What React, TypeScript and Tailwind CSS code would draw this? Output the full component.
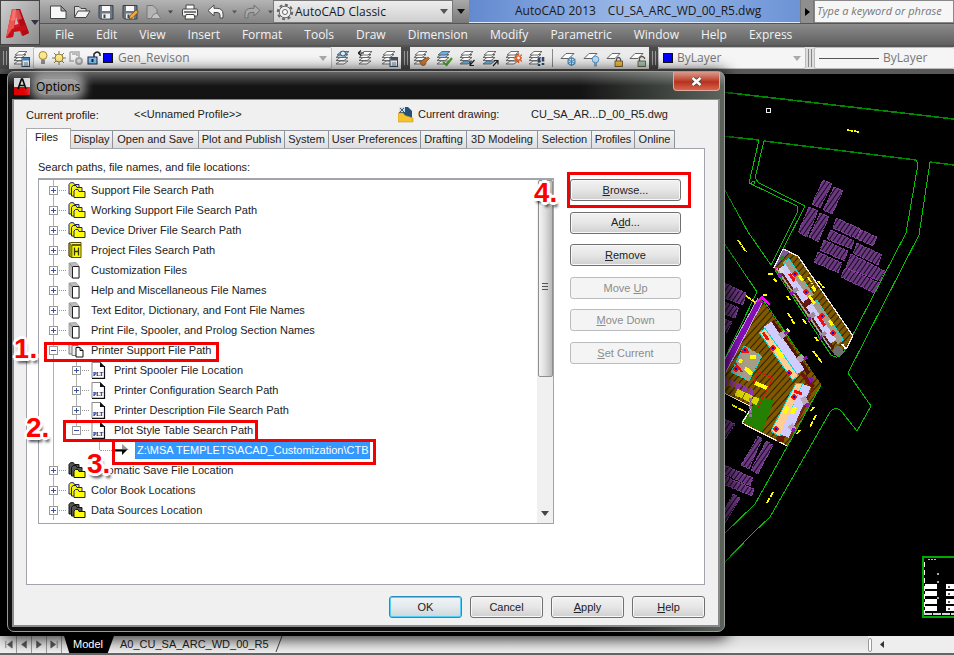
import React from "react";

const UI = "font-['Liberation_Sans',Arial,sans-serif]";
const SEGOE = "font-['Open_Sans','Noto_Sans',sans-serif]";

/* ---------- small glyphs ---------- */

function Caret({ color = "#333", small }: { color?: string; small?: boolean }) {
  return (
    <svg width={small ? 5 : 8} height={small ? 4 : 5} viewBox="0 0 8 5" className="pointer-events-none shrink-0">
      <path d="M0 0H8L4 5Z" fill={color} />
    </svg>
  );
}

type QuickName = "new" | "open" | "save" | "saveas" | "plot" | "print" | "undo" | "redo";

function QuickIcon({ name }: { name: QuickName }) {
  return (
    <svg width="18" height="16" viewBox="0 0 18 16" className="shrink-0">
      {name === "new" && <path d="M1.500 2H12L17 7V14.500H1.500ZM12 2V7H17" fill="#f8f8f8" stroke="#444" />}
      {name === "open" && (
        <>
          <path d="M1.500 13V2.500H6L8 4.500H13V7" fill="#ddd" stroke="#444" />
          <path d="M1.500 13.500L5 7H17L13 13.500Z" fill="#f4f4f4" stroke="#444" />
        </>
      )}
      {(name === "save" || name === "saveas") && (
        <>
          <path d="M2 1.500H16V15H3.500L2 13.500Z" fill="#6d7884" stroke="#38414a" />
          <rect x="5" y="2" width="8" height="5" fill="#fafafa" />
          <rect x="5" y="9.500" width="8" height="5" fill="#eee" />
          <rect x="6.500" y="10.500" width="2" height="3.500" fill="#444" />
        </>
      )}
      {name === "saveas" && <path d="M8 15L9 11.500L15 6L17.500 8L11.500 14Z" fill="#f0a83c" stroke="#6b4a16" strokeWidth=".8" />}
      {name === "plot" && (
        <>
          <path d="M2 1.500H8L12 5.500V14.500H2Z" fill="#b4b4b4" stroke="#777" />
          <path d="M6 14.500Q8 9 12 9L16 14.500Z" fill="#c4c4c4" stroke="#808080" />
        </>
      )}
      {name === "print" && (
        <>
          <path d="M5 5V1H13V5" fill="#fff" stroke="#444" />
          <rect x="1.500" y="5" width="15" height="7" rx="1" fill="#f1f1f1" stroke="#444" />
          <path d="M3 8H15" stroke="#555" strokeWidth="1.500" />
          <path d="M5 10.500H13L14 15H4Z" fill="#fff" stroke="#444" />
        </>
      )}
      {name === "undo" && <path d="M1 6.500L7 1V4.300H10Q16 4.500 16 10V14H13V11Q13 8.500 10 8.500H7V12Z" fill="#f6f6f6" stroke="#4a4a4a" />}
      {name === "redo" && <path d="M17 6.500L11 1V4.300H8Q2 4.500 2 10V14H5V11Q5 8.500 8 8.500H11V12Z" fill="#a9a9a9" stroke="#6f6f6f" />}
    </svg>
  );
}

type LayerName =
  | "props" | "current" | "prev" | "states" | "match" | "check"
  | "iso" | "uniso" | "gear" | "walk" | "freeze" | "off" | "lock" | "unlock";

function LayerIcon({ name }: { name: LayerName }) {
  const single = name === "freeze" || name === "off" || name === "lock" || name === "unlock";
  const blue = name === "current" || name === "check";
  const low = name === "iso" || name === "uniso";
  return (
    <svg width="17" height="17" viewBox="0 0 17 17" className="shrink-0">
      {single ? (
        <path d="M1 8.500L6 3.500H14L9 8.500Z" fill="#fff" stroke="#666" />
      ) : (
        <g fill="#fff" stroke="#606060" strokeWidth=".9">
          <path d="M1 14L5 11H13L9 14Z" fill={low ? "#65b2e8" : "#fff"} />
          <path d="M1 10.500L5 7.500H13L9 10.500Z" />
          <path d="M1 7.500L5 4.500H13L9 7.500Z" fill={blue ? "#a9d5f4" : "#fff"} />
          <path d="M2 5L6 1.500H14L10 5Z" fill={blue ? "#65b2e8" : "#fff"} />
        </g>
      )}
      {(name === "props" || name === "states") && (
        <>
          <rect x="9" y="7.500" width="7.500" height="9" fill="#eef4fa" stroke="#35506c" />
          <rect x="9.500" y="8" width="6.500" height="2.500" fill={name === "props" ? "#3f86c6" : "#4a5560"} />
          <path d="M11 13H15M11 15H15" stroke="#666" strokeWidth=".8" />
        </>
      )}
      {name === "current" && <circle cx="8" cy="3.500" r="2.500" fill="#dcecf8" stroke="#333" strokeWidth=".8" />}
      {name === "prev" && <path d="M0 3H6M0 3L3 .5M0 3L3 5.500" stroke="#222" strokeWidth="1.200" fill="none" />}
      {name === "match" && <path d="M6 11Q9 13 10 10L15 7L16.500 8.500L13 12Q13 16 9 15.500Z" fill="#c9772e" stroke="#7c441a" strokeWidth=".7" />}
      {name === "check" && <path d="M7 12L10.500 15L16 8" fill="none" stroke="#43a320" strokeWidth="2.200" />}
      {name === "iso" && <path d="M15.500 10L11 15M11 11.500V15.500H15" fill="none" stroke="#222" strokeWidth="1.200" />}
      {name === "uniso" && <path d="M11 16L15.500 11M12 10.500H16V14.500" fill="none" stroke="#222" strokeWidth="1.200" />}
      {name === "gear" && (
        <>
          <path d="M13.500 3V13M8.500 8H18M10 4.500L17 11.500M17 4.500L10 11.500" stroke="#e8642c" strokeWidth="1.400" />
          <circle cx="13.500" cy="8" r="2" fill="#fff" stroke="#e8642c" strokeWidth="1.200" />
        </>
      )}
      {name === "walk" && <path d="M11 8V12.500M11 14V16M15 7V11.500M15 13V15" stroke="#2b4a72" strokeWidth="2.600" />}
      {name === "freeze" && (
        <>
          <circle cx="11.500" cy="11.500" r="3.500" fill="#d8effc" stroke="#4c8fc4" strokeWidth="1.300" />
          <path d="M11.500 7V16M7.500 9.200L15.500 13.800M15.500 9.200L7.500 13.800" stroke="#4c8fc4" />
        </>
      )}
      {name === "off" && (
        <>
          <circle cx="12.500" cy="9.500" r="3.300" fill="#bfe0f8" stroke="#5b94c4" />
          <rect x="11" y="13" width="3" height="3.500" fill="#8ea5b8" />
        </>
      )}
      {(name === "lock" || name === "unlock") && (
        <>
          <path d={name === "lock" ? "M10.500 11V9Q12.500 6 14.500 9V11" : "M10.500 11V8Q13 5 15.500 8V9"} fill="none" stroke="#555" strokeWidth="1.300" />
          <rect x="9" y="11" width="7.500" height="5.500" fill={name === "lock" ? "#f0b93a" : "#9cc4b4"} stroke="#5a4a20" strokeWidth=".8" />
        </>
      )}
    </svg>
  );
}

type NodeIcon = "folders" | "blackfolders" | "book" | "file" | "pages" | "plt" | "arrow";

function TreeIcon({ kind }: { kind: NodeIcon }) {
  if (kind === "plt")
    return (
      <svg width="15" height="17" viewBox="0 0 15 17">
        <path d="M1 .500H9.500L13.500 4.500V16H1Z" fill="#fff" stroke="#888" />
        <path d="M13.500 4V16.500H1" fill="none" stroke="#111" strokeWidth="1.200" />
        <path d="M9 0L14 5H9Z" fill="#111" />
        <text x="2" y="14" fontSize="5.500" fontWeight="700" fill="#000080" fontFamily="Liberation Serif, serif">PLT</text>
      </svg>
    );
  if (kind === "arrow")
    return (
      <svg width="15" height="12" viewBox="0 0 15 12">
        <path d="M0 5H8V0L15 6H0Z" fill="#999" />
        <path d="M0 5.500H13.500L8 11V7.500H0Z" fill="#000" />
      </svg>
    );
  if (kind === "file")
    return (
      <svg width="13" height="17" viewBox="0 0 13 17">
        <path d="M1 1L8 .5L11 4V16H4L1 13Z" fill="#bdbdbd" stroke="#999" strokeWidth=".8" />
        <path d="M4.500 4.500H11V16H4.500Z" fill="#fff" stroke="#222" />
        <path d="M1.500 1.500L4.500 5" stroke="#888" />
      </svg>
    );
  if (kind === "book")
    return (
      <svg width="14" height="16" viewBox="0 0 14 16">
        <path d="M1 1L4 .500H13V15.500H4L1 14Z" fill="#ff0" stroke="#554d00" />
        <path d="M1 1L4 3.500V15.500L1 14Z" fill="#a09a00" stroke="#333" strokeWidth=".6" />
        <path d="M4 3H13" stroke="#665f00" strokeWidth="2" />
        <path d="M6.500 5.500V13.500M10.500 5.500V13.500M6.500 9.500H10.500" stroke="#333300" strokeWidth="1.300" />
      </svg>
    );
  if (kind === "pages")
    return (
      <svg width="16" height="15" viewBox="0 0 16 15">
        <path d="M1 .500H7V11H1Z" fill="#ddd" stroke="#777" />
        <path d="M4 2.500H10V12.500H4Z" fill="#eee" stroke="#777" />
        <path d="M8 4.500H12L15 7.500V14H8Z" fill="#fff" stroke="#111" />
        <path d="M12 4.500V7.500H15" fill="none" stroke="#111" />
      </svg>
    );
  const black = kind === "blackfolders";
  const edge = black ? "#111" : "#22226c";
  const back = black ? "#555" : "#f4f400";
  return (
    <svg width="18" height="16" viewBox="0 0 18 16">
      <path d="M1 12V2.500L2.500 .700H5.500L6.500 2.500H11V12Z" fill={back} stroke={edge} />
      <path d="M3.500 14V5.500L5 3.500H8L9 5.500H14V14Z" fill={back} stroke={edge} />
      <path d="M6 15.500V9L7.500 7.500H10L11 9.500H17V15.500Z" fill="#ff0" stroke={edge} />
    </svg>
  );
}

/* ---------- application chrome ---------- */

const menus = ["File", "Edit", "View", "Insert", "Format", "Tools", "Draw", "Dimension", "Modify", "Parametric", "Window", "Help", "Express"];

function IconButton({ label, className, children }: { label: string; className: string; children: React.ReactNode }) {
  return (
    <button type="button" aria-label={label} className={`flex shrink-0 items-center justify-center ${className}`}>
      {children}
    </button>
  );
}

function TitleBar() {
  return (
    <div className="flex h-[23px] bg-linear-to-b from-[#b4b4b4] to-[#848484] text-[12px] text-[#1a1a1a]">
      <div className="flex w-[233px] shrink-0 items-center pl-1.5">
        <IconButton label="New" className="w-6"><QuickIcon name="new" /></IconButton>
        <IconButton label="Open" className="w-6"><QuickIcon name="open" /></IconButton>
        <IconButton label="Save" className="w-6"><QuickIcon name="save" /></IconButton>
        <IconButton label="Save as" className="w-6"><QuickIcon name="saveas" /></IconButton>
        <IconButton label="Plot" className="w-6"><QuickIcon name="plot" /></IconButton>
        <IconButton label="More plot options" className="w-2"><Caret color="#444" small /></IconButton>
        <IconButton label="Print" className="w-8"><QuickIcon name="print" /></IconButton>
        <IconButton label="Undo" className="w-5"><QuickIcon name="undo" /></IconButton>
        <IconButton label="Undo list" className="w-4"><Caret color="#555" small /></IconButton>
        <IconButton label="Redo" className="w-5"><QuickIcon name="redo" /></IconButton>
        <IconButton label="Redo list" className="w-4"><Caret color="#555" small /></IconButton>
      </div>
      <label className="flex w-[180px] shrink-0 items-center border border-[#777] bg-linear-to-b from-[#eee] to-[#cfcfcf] pl-0.5 pr-1">
        <svg width="18" height="18" viewBox="0 0 18 18" className="shrink-0">
          <g stroke="#666" fill="none">
            <circle cx="9" cy="9" r="7.200" strokeWidth="2" strokeDasharray="3 2.600" />
            <circle cx="9" cy="9" r="5.800" fill="#eee" />
            <circle cx="9" cy="9" r="2.500" fill="#fff" />
          </g>
        </svg>
        <select aria-label="Workspace" className="min-w-0 flex-1 appearance-none bg-transparent pl-px outline-none">
          <option>AutoCAD Classic</option>
        </select>
        <Caret color="#555" />
      </label>
      <IconButton label="Customize toolbar" className="w-4 bg-linear-to-b from-[#aaa] to-[#787878]"><Caret color="#111" /></IconButton>
      <div className="flex min-w-0 flex-1 items-center gap-3 border-b border-[#dfe8f5] bg-linear-to-r from-[#6389cf] via-[#9dbbe9] to-[#6d93d6] pl-[46px] whitespace-nowrap">
        <span>AutoCAD 2013</span>
        <span>CU_SA_ARC_WD_00_R5.dwg</span>
      </div>
      <IconButton label="Collapse search" className="w-3.5 border-x border-[#777] bg-[#8e8e8e]">
        <svg width="5" height="8" viewBox="0 0 5 8"><path d="M0 0V8L5 4Z" fill="#000" /></svg>
      </IconButton>
      <input aria-label="Search help" placeholder="Type a keyword or phrase" className="w-[140px] shrink-0 border border-[#888] bg-[#f6f6f6] px-0.5 text-[11px] italic outline-none placeholder:text-[#777]" />
    </div>
  );
}

function Chrome() {
  return (
    <header className={`flex text-[12px] ${SEGOE}`}>
      <button type="button" aria-label="Application menu" className="flex w-10 shrink-0 items-center gap-0.5 border border-[#444] bg-linear-to-br from-[#cfcfcf] to-[#8c8c8c] pl-1">
        <svg width="24" height="34" viewBox="0 0 24 34" className="shrink-0">
          <path d="M1 32L7 3H15L24 27L17 30L14.500 24L9 25L8 31Z" fill="#d9141c" />
          <path d="M1 32L7 3H11L8 31Z" fill="#ee5550" />
          <path d="M15 3L24 27L18 30L11 3Z" fill="#b00c14" />
          <path d="M9.500 19L11 11L13.500 18Z" fill="#b9b9b9" />
          <path d="M1 32L7 23L20 19L22 24L9 26L8 31Z" fill="#c41018" />
          <path d="M8 4H14L17 13L6 15Z" fill="#ff9c94" opacity=".45" />
        </svg>
        <Caret color="#334" />
      </button>
      <div className="flex min-w-0 flex-1 flex-col">
        <TitleBar />
        <nav className="flex h-[22px] items-center gap-[22px] border-t border-[#555] bg-linear-to-b from-[#8c8c8c] to-[#606060] pl-[15px] text-[#f2f2f2]">
          {menus.map((m) => (
            <button type="button" key={m} className="leading-5">{m}</button>
          ))}
        </nav>
      </div>
    </header>
  );
}

function Grip() {
  return (
    <div className="flex w-[9px] shrink-0 items-center justify-center gap-0.5 bg-[#4a4a4a]">
      <i className="h-3.5 w-px bg-[#999]" />
      <i className="h-3.5 w-px bg-[#999]" />
    </div>
  );
}

function Toolbars() {
  const tools: LayerName[] = ["match", "check", "iso", "uniso", "gear", "walk"];
  const single: LayerName[] = ["freeze", "off", "lock", "unlock"];
  return (
    <div className={`flex h-[29px] border-t-2 border-b-[5px] border-t-[#555] border-b-[#595959] bg-[#ececec] text-[12px] text-[#777] ${SEGOE}`}>
      <Grip />
      <IconButton label="Layer properties" className="w-6"><LayerIcon name="props" /></IconButton>
      <label className="flex w-[299px] shrink-0 items-center rounded-xs border border-[#bbb] bg-[#f5f5f5] pr-1">
        <svg width="80" height="18" viewBox="0 0 80 18" className="shrink-0">
          <circle cx="9" cy="6.500" r="4" fill="#ffe98a" stroke="#a08a3a" />
          <path d="M7 10.500H11V15H7Z" fill="#8f8f8f" />
          <path d="M25 2V16M18 9H32M20 4L30 14M30 4L20 14" stroke="#887c4a" />
          <circle cx="25" cy="9" r="4" fill="#ffe98a" stroke="#8f7d38" />
          <path d="M36 3H45V8M36 3V12H40M38 5H43V7" fill="none" stroke="#aaa" strokeWidth="1.500" />
          <circle cx="45" cy="12" r="3" fill="#ddd" stroke="#aaa" strokeWidth="2" />
          <path d="M60 8V5Q63.500 1 66 5V7" fill="none" stroke="#222" strokeWidth="1.500" />
          <rect x="54" y="8" width="9" height="7" fill="#7cc4ec" stroke="#225" />
          <path d="M57.500 10H59.500V13H57.500Z" fill="#123" />
          <rect x="69.500" y="4.500" width="9" height="9" fill="#00f" stroke="#111" />
        </svg>
        <select aria-label="Layer" className="min-w-0 flex-1 appearance-none bg-transparent pl-1 outline-none">
          <option>Gen_Revison</option>
        </select>
        <Caret color="#aaa" />
      </label>
      <IconButton label="Make layer current" className="w-[23px]"><LayerIcon name="current" /></IconButton>
      <IconButton label="Layer previous" className="w-[23px]"><LayerIcon name="prev" /></IconButton>
      <IconButton label="Layer states" className="w-[23px]"><LayerIcon name="states" /></IconButton>
      <Grip />
      {tools.map((t) => (
        <IconButton key={t} label={`Layer ${t}`} className="w-[23px]"><LayerIcon name={t} /></IconButton>
      ))}
      <i className="mx-1 my-0.5 w-px shrink-0 bg-[#888]" />
      {single.map((t) => (
        <IconButton key={t} label={`Layer ${t}`} className="w-[23px]"><LayerIcon name={t} /></IconButton>
      ))}
      <Grip />
      <label className="flex w-[148px] shrink-0 items-center gap-1 rounded-xs border border-[#bbb] bg-[#f5f5f5] px-1">
        <i className="size-2.5 border border-[#111] bg-[#00f]" />
        <select aria-label="Color" className="min-w-0 flex-1 appearance-none bg-transparent outline-none">
          <option>ByLayer</option>
        </select>
        <Caret color="#aaa" />
      </label>
      <div className="flex w-2 shrink-0 justify-center gap-0.5 bg-[#ddd] py-0.5">
        <i className="w-px bg-[#888]" />
        <i className="w-px bg-[#888]" />
      </div>
      <label className="flex min-w-0 flex-1 items-center gap-1 rounded-xs border border-r-0 border-[#bbb] bg-[#f5f5f5] pl-1">
        <i className="h-px w-[60px] bg-[#555]" />
        <select aria-label="Linetype" className="min-w-0 flex-1 appearance-none bg-transparent outline-none">
          <option>ByLayer</option>
        </select>
      </label>
    </div>
  );
}

/* ---------- drawing area ---------- */

const parking = [
  "823,180 832,184 820,208 812,204", "834,187 843,191 832,214 823,210", "809,207 818,211 807,237 798,232",
  "820,213 829,217 818,242 809,237", "836,218 861,229 857,239 833,228", "861,230 877,237 873,246 857,239",
  "831,230 854,241 851,249 827,239", "824,240 848,251 844,261 820,250", "857,243 882,255 878,265 853,253",
  "818,252 842,263 838,273 814,262", "851,254 885,271 880,281 846,268", "845,268 880,283 874,293 841,277",
  "722,282 746,293 743,305 722,297", "722,301 739,308 735,318 722,313", "722,318 732,322 727,332 722,332",
  "722,418 735,424 722,444", "758,436 762,439 749,469 741,465", "766,441 773,445 758,474 751,470",
  "722,464 753,478 750,486 722,473", "722,475 754,489 752,496 722,484", "733,494 740,498 722,528 722,514",
];

const roads = [
  "M759 140L749 183L797 206L798 211L771 265L748 232L722 185",
  "M764 141L755 178L759 183L805 206L783 249",
  "M916 160L918 164L906 233L847 346Q840 362 831 355L775 270",
  "M930 162L919 235L848 373L871 406L857 431L842 412Q836 405 830 412L770 517L753 533L722 565",
  "M722 240L757 292L722 364",
  "M762 298L821 385L787 447L755 504L722 536",
];

function Ring({ x, y }: { x: number; y: number }) {
  return <circle cx={x} cy={y} r="2.200" fill="#0000f0" stroke="#f01010" strokeWidth="1.200" />;
}

function SitePlan() {
  return (
    <svg width="100%" height="100%" className="absolute inset-0" shapeRendering="crispEdges">
      <defs>
        <pattern id="stalls" width="4" height="4" patternUnits="userSpaceOnUse" patternTransform="rotate(35)">
          <rect width="4" height="4" fill="#6a3a80" />
          <rect width="1" height="4" fill="#1a0822" />
        </pattern>
        <pattern id="deck" width="5" height="5" patternUnits="userSpaceOnUse" patternTransform="rotate(42)">
          <rect width="5" height="5" fill="#805800" />
          <rect width="1" height="5" fill="#2e2000" />
        </pattern>
      </defs>
      <g transform="translate(0,-74)">
        <path d="M722 92L954 119M722 136L759 140M764 141L916 160M930 162L954 165" stroke="#008800" strokeWidth="1.600" fill="none" />
        {roads.map((d) => <path key={d} d={d} stroke="#00c400" fill="none" />)}
        {parking.map((p) => <polygon key={p} points={p} fill="url(#stalls)" stroke="#a050b8" strokeDasharray="2 1" strokeWidth=".8" />)}
        <circle cx="753" cy="183" r="1.500" fill="none" stroke="#0c0" />
        <rect x="766" y="108" width="4" height="4" fill="none" stroke="#eee" />

        {/* upper block */}
        <polygon points="783,249 798,256 853,336 845,350 832,352 774,268" fill="url(#deck)" />
        <path d="M774 268L783 249L798 256L853 336L846 349" fill="none" stroke="#eee" strokeWidth="1.300" />
        <polygon points="783,250 789,252 780,262 776,265" fill="#7d5a9a" />
        <g transform="translate(788,259) rotate(56)">
          <rect x="2" y="11" width="98" height="4" fill="#5a1c0c" />
          <rect x="2" y="14" width="96" height="1.500" fill="#a8a8a8" />
          <rect x="0" y="-1" width="44" height="7" fill="#a39a8a" stroke="#00dcdc" />
          <rect x="3" y="5" width="42" height="7" fill="#d0ccff" />
          <rect x="50" y="-1" width="48" height="7" fill="#a39a8a" stroke="#00dcdc" />
          <rect x="50" y="5" width="44" height="7" fill="#d0ccff" />
          <rect x="44" y="1" width="6" height="10" fill="#6b1414" />
          <path d="M13 7H22M64 7H76" stroke="#f01010" strokeWidth="3" />
          <path d="M20 0H26M36 -5H42M42 3H52M74 0H80" stroke="#ff0" strokeWidth="3" />
          <path d="M28 12H32M58 12H63M80 13H84" stroke="#9b8c9f" strokeWidth="7" />
          <path d="M29 16H32M60 16H63M82 17H85" stroke="#8a18b0" strokeWidth="4" />
        </g>
        <Ring x={795} y={274} /><Ring x={806} y={292} /><Ring x={822} y={316} /><Ring x={833} y={333} />
        <circle cx="838" cy="351" r="5" fill="#6f6f6f" />
        <path d="M842 344L846 349" stroke="#fff" strokeWidth="2" />
        <path d="M780 268L783 273" stroke="#ddd" strokeWidth="4" />
        <circle cx="780" cy="275" r="2.500" fill="#8020b0" />
        <circle cx="776" cy="268" r="1.500" fill="#f0f" />
        <circle cx="782" cy="258" r="2" fill="#228a18" />

        {/* lower block */}
        <polygon points="760,297 821,384 787,446 742,423 752,407 722,392 722,370" fill="url(#deck)" />
        <path d="M760 301L722 371" stroke="#8410b8" strokeWidth="7" />
        <path d="M758 298L720 368M762 303L726 372" stroke="#c6a0d8" strokeWidth="1" />
        <path d="M757 302L762 297L770 305" fill="none" stroke="#f0f" strokeWidth="2" />
        <polygon points="757,397 774,400 762,432 742,421 753,405" fill="#238000" />
        <path d="M722 392L752 407L742 423L787 446" fill="none" stroke="#eee" strokeWidth="1.300" />
        <g transform="translate(768,324) rotate(55)">
          <rect x="0" y="-7" width="64" height="4" fill="#501409" />
          <rect x="0" y="-4" width="58" height="9" fill="#d0ccff" />
          <rect x="2" y="5" width="58" height="7" fill="#ffce90" stroke="#00dcdc" />
          <path d="M4 9H13" stroke="#f01010" strokeWidth="3" />
          <path d="M24 7H36" stroke="#ff0" strokeWidth="4" />
          <path d="M14 -6H20M44 -7H50" stroke="#b39fb0" strokeWidth="7" />
          <path d="M16 -10H19M48 -11H51" stroke="#8a18b0" strokeWidth="4" />
        </g>
        <polygon points="804,373 815,386 811,389 800,374" fill="#701808" />
        <polygon points="796,383 803,383 780,437 771,431" fill="#ffce90" stroke="#00dcdc" />
        <polygon points="803,384 811,387 789,438 780,434" fill="#d0ccff" />
        <path d="M813 388L790 437" stroke="#7a2414" strokeWidth="2" />
        <path d="M794 391L802 394" stroke="#f01010" strokeWidth="3" />
        <path d="M784 413L788 407M792 414L795 407" stroke="#ff0" strokeWidth="4" />
        <path d="M806 404L803 397M794 430L790 425" stroke="#b7a7b7" strokeWidth="6" />
        <path d="M806 404L809 406M792 429L795 431M810 377L812 382" stroke="#8a18b0" strokeWidth="4" />
        <rect x="777" y="436" width="7" height="6" fill="#701808" />
        <polygon points="744,346 762,356 749,381 731,372" fill="#a79c88" stroke="#00dcdc" strokeDasharray="4 1" />
        <path d="M741 352H749M735 363L742 372" stroke="#f01010" strokeWidth="2" />
        <path d="M750 357H756M745 368L752 374M739 360L742 362" stroke="#ff0" strokeWidth="4" />
        <path d="M758 372L773 378L758 408M758 372L753 386" fill="none" stroke="#e01010" />
        <path d="M755 383L767 388" stroke="#ff0" strokeWidth="4" />
        <path d="M723 380L754 393" stroke="#8f38a4" strokeWidth="6" strokeDasharray="5 2" />
        <path d="M736 392L758 402" stroke="#d8d800" strokeWidth="7" strokeDasharray="8 1" />
        <path d="M750 398V418" stroke="#9a6ca0" strokeWidth="3" strokeDasharray="3 1" />
        <Ring x={745} y={350} /><Ring x={736} y={369} /><Ring x={773} y={348} /><Ring x={789} y={373} /><Ring x={794} y={397} /><Ring x={776} y={429} />

        {/* road labels */}
        <path
          d="M847 130L859 132M738 240L746 252M768 274H773M774 279L777 282M763 295H767M746 296L755 302M787 296L790 300M788 313L795 325M803 319L806 324M787 329L790 332M815 337L818 341M813 351L817 356M814 352L822 363M808 277L812 284M818 281L824 288M732 405L746 412M816 415L810 427M811 411L814 407M797 434L800 430M773 492L767 503"
          stroke="#ff0" strokeWidth="1.800" strokeDasharray="6 1" fill="none"
        />

        {/* title block */}
        <path d="M954 557H923V617H954" fill="none" stroke="#00a800" strokeWidth="2" />
        <path d="M924 562V615" stroke="#fff" strokeDasharray="5 3" />
        <path d="M928 559H937" stroke="#bbb" strokeDasharray="2 1" />
        {[584, 591, 599, 606].map((y) => (
          <g key={y}>
            <rect x="925" y={y} width="12" height="5" fill="#fff" />
            <rect x="946" y={y} width="8" height="5" fill="#fff" />
            <rect x="948" y={y + 2} width="2" height="2" fill="#555" />
          </g>
        ))}
        <path d="M924 614H954" stroke="#d4d4e8" strokeWidth="2.500" strokeDasharray="8 1" />
        <path d="M937 574H939M937 582H939M937 598H939" stroke="#aaa" strokeWidth="2" />
      </g>
    </svg>
  );
}

/* ---------- options dialog ---------- */

function Mark({ n, className }: { n: number; className: string }) {
  return (
    <strong
      className={`pointer-events-none absolute z-20 text-[28px] leading-7 font-bold text-[#f00] [text-shadow:2px_0_#fff,-2px_0_#fff,0_2px_#fff,0_-2px_#fff,2px_2px_#fff,-2px_-2px_#fff,2px_-2px_#fff,-2px_2px_#fff,3px_0_#fff,-3px_0_#fff,0_3px_#fff,0_-3px_#fff,2px_5px_3px_rgba(0,0,0,0.7)] ${className}`}
    >
      {n}.
    </strong>
  );
}

function Frame({ className }: { className: string }) {
  return <span className={`pointer-events-none absolute z-10 border-[3px] border-[#f40000] ${className}`} />;
}

type NodeData = {
  label: string;
  icon: NodeIcon;
  depth?: number;
  state?: "plus" | "minus" | "leaf";
};

const nodes: NodeData[] = [
  { label: "Support File Search Path", icon: "folders" },
  { label: "Working Support File Search Path", icon: "folders" },
  { label: "Device Driver File Search Path", icon: "folders" },
  { label: "Project Files Search Path", icon: "book" },
  { label: "Customization Files", icon: "file" },
  { label: "Help and Miscellaneous File Names", icon: "file" },
  { label: "Text Editor, Dictionary, and Font File Names", icon: "file" },
  { label: "Print File, Spooler, and Prolog Section Names", icon: "file" },
  { label: "Printer Support File Path", icon: "pages", state: "minus" },
  { label: "Print Spooler File Location", icon: "plt", depth: 1 },
  { label: "Printer Configuration Search Path", icon: "plt", depth: 1 },
  { label: "Printer Description File Search Path", icon: "plt", depth: 1 },
  { label: "Plot Style Table Search Path", icon: "plt", depth: 1, state: "minus" },
  { label: "Z:\\MSA TEMPLETS\\ACAD_Customization\\CTB", icon: "arrow", depth: 2, state: "leaf" },
  { label: "Automatic Save File Location", icon: "blackfolders" },
  { label: "Color Book Locations", icon: "folders" },
  { label: "Data Sources Location", icon: "blackfolders" },
];

function TreeRow({ node, index }: { node: NodeData; index: number }) {
  const { depth = 0, state = "plus", label, icon } = node;
  return (
    <li className="relative flex h-5 items-center whitespace-nowrap">
      {depth > 0 && <span className="flex h-5 w-[23px] justify-center"><i className="w-px bg-[#b0b0b0]" /></span>}
      {depth > 1 && <span className="w-[23px]" />}
      <span className="relative flex h-5 w-[23px] items-center justify-center">
        <i className={`absolute left-[11px] top-0 w-px bg-[#b0b0b0] ${state === "leaf" || (depth === 1 && state === "minus") ? "h-2.5" : "h-5"}`} />
        <i className={`absolute -right-px top-2.5 border-t border-dotted border-[#999] ${state === "leaf" ? "left-3" : "left-[17px]"}`} />
        {state !== "leaf" && (
          <button type="button" aria-label={state === "plus" ? `Expand ${label}` : `Collapse ${label}`} className="relative flex size-[9px] items-center justify-center border border-[#999] bg-white">
            <i className="absolute h-px w-[5px] bg-[#3c4f9c]" />
            {state === "plus" && <i className="absolute h-[5px] w-px bg-[#3c4f9c]" />}
          </button>
        )}
      </span>
      <span className="flex w-[26px] items-center pl-[3px]"><TreeIcon kind={icon} /></span>
      {state === "leaf" ? (
        <span className="-ml-0.5 border border-dotted border-[#b4701c] bg-[#3399ff] px-px leading-4 text-white">{label}</span>
      ) : (
        <span>{label}</span>
      )}
      {index === 8 && (<><Frame className="left-0.5 top-0.5 h-5 w-[175px]" /><Mark n={1} className="-left-7 -top-[5px]" /></>)}
      {index === 12 && (<><Frame className="left-[21px] top-0 h-[22px] w-[195px]" /><Mark n={2} className="-left-4 -top-1.5" /></>)}
      {index === 13 && (<><Frame className="left-[70px] -top-px h-[26px] w-[264px]" /><Mark n={3} className="left-[45px] top-2.5" /></>)}
    </li>
  );
}

const tabs: [string, string][] = [
  ["Display", "w-[42px]"], ["Open and Save", "w-[86px]"], ["Plot and Publish", "w-[86px]"], ["System", "w-11"],
  ["User Preferences", "w-[92px]"], ["Drafting", "w-[46px]"], ["3D Modeling", "w-[71px]"], ["Selection", "w-[54px]"],
  ["Profiles", "w-[43px]"], ["Online", "w-[40px]"],
];

function PushButton({ children, disabled, primary, wide }: { children: React.ReactNode; disabled?: boolean; primary?: boolean; wide?: boolean }) {
  const tone = disabled
    ? "border-[#b9bdbd] bg-[#f4f4f4] text-[#8c8c8c]"
    : primary
      ? "border-[#2a8dbd] bg-linear-to-b from-[#eef4f7] via-[#e3e9ec] to-[#cdd6dc] text-[#222] shadow-[inset_0_0_0_1px_#4fd0f4]"
      : "border-[#707070] bg-linear-to-b from-[#f2f2f2] via-[#e6e6e6] to-[#cfcfcf] text-[#222] shadow-[inset_0_0_0_1px_#f8f8f8]";
  return (
    <button type="button" disabled={disabled} className={`flex h-[22px] items-center justify-center rounded-[3px] border ${wide ? "w-[111px]" : "w-[73px]"} ${tone}`}>
      <span>{children}</span>
    </button>
  );
}

function OptionsDialog() {
  return (
    <section
      role="dialog"
      aria-label="Options"
      className={`absolute left-[7px] -top-[3px] flex h-[561px] w-[718px] flex-col rounded-[7px] border border-[#9a9a9a] bg-[#101010] px-1 pb-1 text-[11px] text-[#222] shadow-[0_3px_14px_4px_rgba(0,0,0,0.75)] [background-image:linear-gradient(to_bottom,rgba(255,255,255,0.35),rgba(255,255,255,0.02)_14px,transparent_60px),linear-gradient(to_right,transparent_80%,rgba(150,165,150,0.55))] ${UI}`}
    >
      <div className="flex h-[27px] items-start justify-between">
        <div className="flex items-center gap-1.5 pl-0.5 pt-1.5">
          <svg width="16" height="17" viewBox="0 0 16 17">
            <rect width="16" height="9" fill="#d8d8d8" />
            <rect y="9" width="16" height="8" fill="#e00000" />
            <path d="M4 11L7.500 1H8.500L12 11M5.500 7.500H10.500" fill="none" stroke="#000" strokeWidth="1.600" />
          </svg>
          <h1 className={`rounded-full bg-white/55 text-[12px] leading-4 text-black shadow-[0_0_8px_6px_rgba(255,255,255,0.5)] ${SEGOE}`}>Options</h1>
        </div>
        <button type="button" aria-label="Close" className="flex h-[19px] w-[47px] items-center justify-center rounded-b-[4px] border border-t-0 border-[#e0a8a0] bg-linear-to-b from-[#d99a8c] via-[#b8301c] via-55% to-[#d5654c]">
          <svg width="11" height="9" viewBox="0 0 11 9"><path d="M1.500 1L9.500 8M9.500 1L1.500 8" stroke="#444" strokeWidth="4" /><path d="M1.500 1L9.500 8M9.500 1L1.500 8" stroke="#fff" strokeWidth="2.500" /></svg>
        </button>
      </div>
      <div className="flex flex-1 flex-col border-2 border-t border-[#8a8a8a] bg-[#f0f0f0] pl-3 pr-[13px]">
        <div className="grid h-[29px] grid-cols-[108px_264px_20px_113px_1fr] items-center">
          <span className="pt-0.5">Current profile:</span>
          <span>&lt;&lt;Unnamed Profile&gt;&gt;</span>
          <svg width="16" height="17" viewBox="0 0 16 17">
            <path d="M1 1H10L14 5V14H1Z" fill="#24507c" />
            <path d="M1 1H7V6H1Z" fill="#cfe0ee" />
            <path d="M2 2L6 6M6 2L2 6" stroke="#456" />
            <path d="M0 7H5L7 9.500L15 12V16H0Z" fill="#f4c430" stroke="#c89a20" strokeWidth=".6" />
          </svg>
          <span>Current drawing:</span>
          <span>CU_SA_AR...D_00_R5.dwg</span>
        </div>
        <div role="tablist" className="flex h-[19px] items-end">
          <button type="button" role="tab" aria-selected="true" className="relative z-10 -mb-px h-[21px] w-[45px] border border-b-0 border-[#aaa] bg-white pb-1 pr-1 leading-none">Files</button>
          {tabs.map(([name, width]) => (
            <button type="button" role="tab" key={name} className={`h-[18px] shrink-0 whitespace-nowrap border border-b-0 border-l-0 border-[#8f939c] bg-linear-to-b from-[#f4f4f4] to-[#dedede] pb-px leading-none ${width}`}>{name}</button>
          ))}
        </div>
        <div role="tabpanel" className="flex h-[437px] gap-4 border border-[#a2a4ac] bg-white pl-[11px] pt-2.5">
          <div className="w-[516px]">
            <p className="h-[19px] leading-4">Search paths, file names, and file locations:</p>
            <div className="flex h-[346px] border border-t-2 border-[#a2a4ac] bg-white">
              <ul className="flex-1 pl-[3px]">
                {nodes.map((node, i) => <TreeRow key={node.label} node={node} index={i} />)}
              </ul>
              <div className="flex w-4 flex-col items-center bg-[#f0f0f0]">
                <div className="flex h-[197px] w-[15px] items-center justify-center rounded-xs border border-[#8f8f8f] bg-linear-to-r from-[#f4f4f4] via-[#dcdcdc] to-[#b8b8b8] pt-4">
                  <i className="h-2 w-1.5 bg-[repeating-linear-gradient(#555_0_1px,transparent_1px_3px)]" />
                </div>
                <div className="flex flex-1 items-end pb-[7px]"><Caret color="#444" /></div>
              </div>
            </div>
          </div>
          <div className="relative mt-5 flex h-[185px] flex-col justify-between">
            <Frame className="-left-[3px] -top-[7px] h-9 w-[124px]" />
            <Mark n={4} className="-left-9 top-0" />
            <PushButton wide><u>B</u>rowse...</PushButton>
            <PushButton wide>A<u>d</u>d...</PushButton>
            <PushButton wide><u>R</u>emove</PushButton>
            <PushButton wide disabled>Move <u>U</u>p</PushButton>
            <PushButton wide disabled><u>M</u>ove Down</PushButton>
            <PushButton wide disabled><u>S</u>et Current</PushButton>
          </div>
        </div>
        <div className="flex justify-end gap-2 pt-[11px]">
          <PushButton primary>OK</PushButton>
          <PushButton>Cancel</PushButton>
          <PushButton><u>A</u>pply</PushButton>
          <PushButton><u>H</u>elp</PushButton>
        </div>
      </div>
    </section>
  );
}

/* ---------- layout tabs ---------- */

function LayoutBar() {
  const steps: [string, string][] = [
    ["First layout", "M1 0V9M9 0V9L3 4.500Z"], ["Previous layout", "M8 0V9L2 4.500Z"],
    ["Next layout", "M2 0V9L8 4.500Z"], ["Last layout", "M9 0V9M1 0V9L7 4.500Z"],
  ];
  return (
    <footer className={`flex h-[19px] items-stretch border-b-2 border-[#666] bg-linear-to-b from-[#d8d8d8] to-[#f0f0f0] pl-0.5 text-[11px] text-[#222] ${UI}`}>
      {steps.map(([name, d]) => (
        <IconButton key={name} label={name} className="w-[15px] border-r border-[#999]">
          <svg width="8" height="9" viewBox="0 0 10 9"><path d={d} fill="#555" stroke="#555" strokeWidth=".8" /></svg>
        </IconButton>
      ))}
      <button type="button" className="w-[52px] bg-black text-white [clip-path:polygon(4%_0,100%_0,88%_100%,14%_100%)]">Model</button>
      <button type="button" className="px-1.5">A0_CU_SA_ARC_WD_00_R5</button>
      <svg width="8" height="17" viewBox="0 0 8 17"><path d="M7 0L1 16" stroke="#444" /></svg>
      <div className="ml-auto flex w-[86px] items-center gap-2 bg-[#eee]">
        <i className="h-3.5 w-1 rounded-xs border border-[#999] bg-white" />
        <button type="button" aria-label="Scroll left" className="flex">
          <svg width="4" height="7" viewBox="0 0 4 7"><path d="M4 0V7L0 3.500Z" fill="#333" /></svg>
        </button>
      </div>
    </footer>
  );
}

export default function App() {
  return (
    <div className="flex h-screen flex-col overflow-hidden bg-[#555]">
      <Chrome />
      <Toolbars />
      <main className="relative min-h-0 flex-1 bg-black">
        <SitePlan />
        <OptionsDialog />
      </main>
      <LayoutBar />
    </div>
  );
}
